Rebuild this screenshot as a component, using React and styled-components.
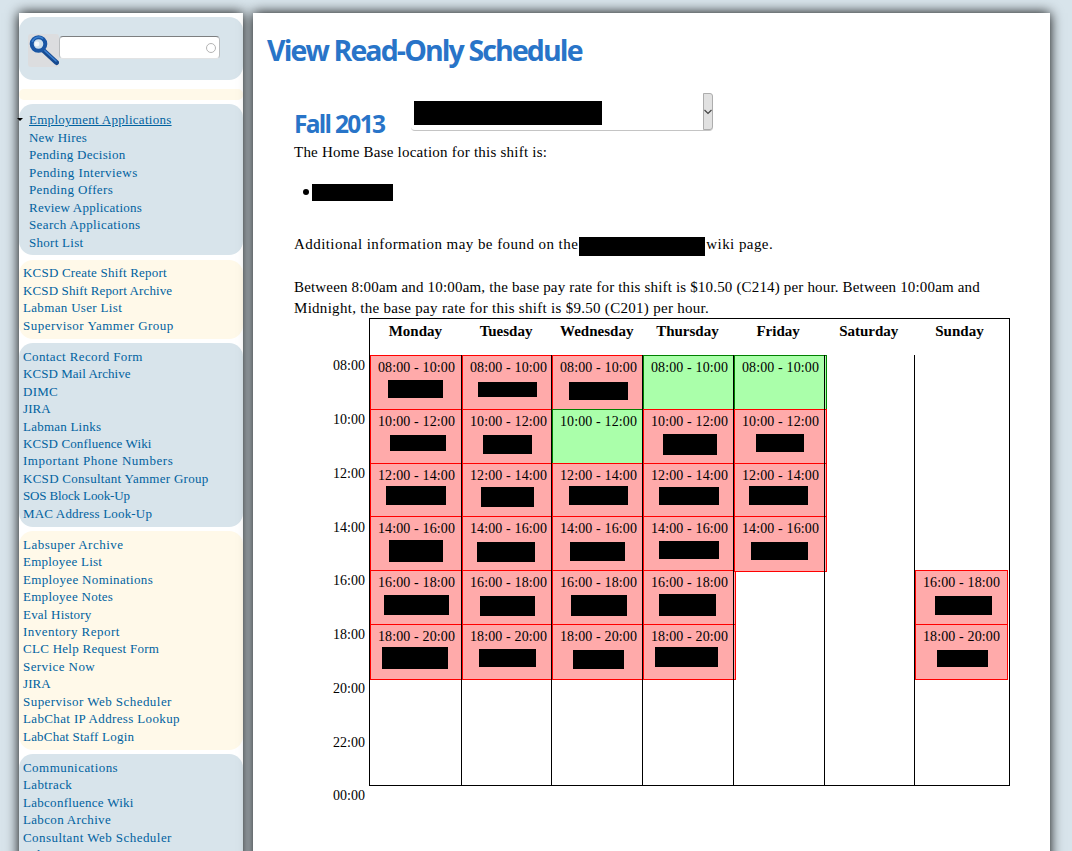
import React from "react";
import styled, { createGlobalStyle } from "styled-components";

const Global = createGlobalStyle`
  * { box-sizing: border-box; }
  body {
    margin: 0;
    background: #d8e4eb;
    color: #000;
    font-family: "Palatino Linotype", Palatino, "Liberation Serif", serif;
  }
`;

const Page = styled.div`
  display: flex;
  gap: 10px;
  height: 851px;
  padding: 13px 0 0 19px;
  overflow: hidden;
`;

const Sidebar = styled.aside`
  flex: none;
  width: 224px;
  height: 870px;
  padding-top: 4px;
  background: #fff;
  box-shadow: 0 0 12px #000;
`;

const Main = styled.main`
  flex: none;
  width: 797px;
  height: 870px;
  background: #fff;
  box-shadow: 0 0 12px #000;
`;

const SearchBlock = styled.form`
  display: flex;
  height: 63px;
  padding: 17px 0 0 9px;
  border-radius: 14px;
  background: #d8e4eb;
`;

const SearchIcon = styled.svg`
  display: block;
  width: 31px;
  height: 33px;
  border-radius: 3px;
  background: #dcdddf;
`;

const SearchField = styled.div`
  display: flex;
  align-items: center;
  justify-content: flex-end;
  width: 161px;
  height: 23px;
  margin-top: 2px;
  padding-right: 3px;
  border: 1px solid #b9bcbe;
  border-top-color: #7d7f80;
  border-bottom-color: #e2e3e4;
  border-radius: 4px;
  background: #fff;
`;

const Throbber = styled.span`
  width: 10px;
  height: 10px;
  border: 1.5px solid #b4b4b4;
  border-radius: 50%;
`;

const Divider = styled.div`
  height: 11px;
  margin: 9px 0 4px;
  border-radius: 5px;
  background: #fff9e9;
`;

const Menu = styled.ul`
  height: ${(p) => p.$height}px;
  margin: 0 0 ${(p) => p.$gap || 4}px;
  padding: ${(p) => p.$top}px 0 0 ${(p) => (p.$indent ? 10 : 4)}px;
  border-radius: 14px;
  background: ${(p) => (p.$cream ? "#fff9e9" : "#d8e4eb")};
  list-style: none;
`;

const MenuItem = styled.li`
  position: relative;
  height: ${(p) => p.$pitch}px;
  line-height: 17.5px;
  font-size: 13px;
  letter-spacing: ${(p) => 0.28 + p.$adjust}px;
  white-space: nowrap;
`;

const MenuLink = styled.a`
  color: #0062a0;
  text-decoration: ${(p) => (p.$current ? "underline" : "none")};
`;

const Expander = styled.span`
  position: absolute;
  left: -12px;
  top: 7px;
  border: 3px solid transparent;
  border-top-color: #000;
  border-bottom: 0;
`;

const Title = styled.h1`
  margin: 0;
  padding: 17px 0 0 14px;
  font: 700 28.5px/40px "Open Sans", sans-serif;
  letter-spacing: -1.88px;
  color: #2874c8;
  white-space: nowrap;
`;

const Content = styled.div`
  padding-left: 41px;
`;

const TermRow = styled.div`
  display: flex;
  height: 60px;
  margin-top: 10px;
`;

const Term = styled.h2`
  width: 117px;
  margin: 0;
  padding-top: 27px;
  font: 700 24.5px/34px "Open Sans", sans-serif;
  letter-spacing: -1.7px;
  color: #2874c8;
`;

const Select = styled.div`
  display: flex;
  justify-content: space-between;
  width: 302px;
  height: 38px;
  margin-top: 13px;
  padding-left: 3px;
  border-bottom: 1px solid #c4c4c4;
  border-radius: 4px;
`;

const SelectButton = styled.span`
  display: flex;
  align-items: center;
  justify-content: center;
  width: 10px;
  height: 37px;
  border: 1px solid #adadad;
  border-radius: 0 3px 3px 0;
  background: #e1e1e1;
`;

const Redaction = styled.span`
  display: block;
  flex: none;
  width: ${(p) => p.$w}px;
  height: ${(p) => p.$h}px;
  margin: ${(p) => p.$top || 0}px ${(p) => p.$right || 0}px 0 ${(p) => p.$left || 0}px;
  background: #000;
`;

const Text = styled.p`
  display: flex;
  height: 21px;
  margin: ${(p) => p.$top}px 0 0;
  font-size: 15px;
  line-height: 21px;
  letter-spacing: ${(p) => p.$spacing || 0.2}px;
  white-space: nowrap;
`;

const BaseList = styled.ul`
  display: flex;
  height: 17px;
  margin: 21px 0 0;
  padding: 0 0 0 9px;
  list-style: none;
`;

const Bullet = styled.span`
  width: 6px;
  height: 6px;
  margin: 5px 3px 0 0;
  border-radius: 50%;
  background: #000;
`;

const Schedule = styled.div`
  display: flex;
  margin-top: -1px;
`;

const Hours = styled.div`
  width: 71px;
  padding-top: 21.3px;
  margin-right: 4px;
`;

const Hour = styled.div`
  height: 53.75px;
  line-height: 54px;
  font-size: 14px;
  text-align: right;
`;

const Week = styled.div`
  width: 641px;
  height: 468px;
  border: 1px solid #000;
`;

const DayNames = styled.div`
  display: grid;
  grid-template-columns: repeat(7, 90.7px);
  height: 36px;
  font-size: 15px;
  font-weight: 700;
  line-height: 25px;
  text-align: center;
`;

const Days = styled.div`
  display: grid;
  grid-template-columns: 92px 90px 91px 91px 91px 90px 94px;
`;

const Day = styled.div`
  position: relative;
  display: grid;
  grid-template-rows: 54px 54px 53px 54px 54px;
  grid-auto-rows: 54px;
  height: 430px;
  &:not(:last-child)::after {
    content: "";
    position: absolute;
    z-index: 1;
    top: 0;
    right: 0;
    width: 1px;
    height: 430px;
    background: #000;
  }
`;

const Shift = styled.div`
  grid-row: ${(p) => p.$row};
  width: 93px;
  height: 56px;
  border: 1px solid ${(p) => (p.$open ? "#008000" : "#f00")};
  background: ${(p) => (p.$open ? "#afa" : "#faa")};
`;

const ShiftTime = styled.div`
  height: 22px;
  font-size: 14px;
  line-height: 24px;
  letter-spacing: 0.12px;
  text-align: center;
`;

// A link is its label and, where the label needs it, a tracking adjustment.
const menus = [
  {
    height: 151, top: 7, gap: 5, indent: true, pitch: 17.5,
    links: [["Employment Applications"], ["New Hires", -0.05], ["Pending Decision"], ["Pending Interviews", 0.16], ["Pending Offers", 0.1], ["Review Applications", -0.05], ["Search Applications", 0.1], ["Short List"]],
  },
  {
    height: 79, top: 4, cream: true, pitch: 17.5,
    links: [["KCSD Create Shift Report", -0.08], ["KCSD Shift Report Archive", -0.16], ["Labman User List", 0.05], ["Supervisor Yammer Group", 0.2]],
  },
  {
    height: 184, top: 4.85, pitch: 17.45,
    links: [["Contact Record Form", 0.1], ["KCSD Mail Archive", -0.24], ["DIMC"], ["JIRA", -0.2], ["Labman Links", -0.05], ["KCSD Confluence Wiki", -0.17], ["Important Phone Numbers", 0.26], ["KCSD Consultant Yammer Group"], ["SOS Block Look-Up", -0.41], ["MAC Address Look-Up", -0.1]],
  },
  {
    height: 219, top: 4.85, cream: true, pitch: 17.45,
    links: [["Labsuper Archive", 0.2], ["Employee List", -0.05], ["Employee Nominations", 0.07], ["Employee Notes"], ["Eval History", -0.08], ["Inventory Report", 0.2], ["CLC Help Request Form"], ["Service Now", 0.14], ["JIRA", -0.2], ["Supervisor Web Scheduler", 0.17], ["LabChat IP Address Lookup", 0.08], ["LabChat Staff Login", -0.08]],
  },
  {
    height: 184, top: 4.85, pitch: 17.45,
    links: [["Communications", 0.17], ["Labtrack", 0.1], ["Labconfluence Wiki"], ["Labcon Archive", 0.05], ["Consultant Web Scheduler", 0.17], ["Labman"]],
  },
];

const hours = ["08:00", "10:00", "12:00", "14:00", "16:00", "18:00", "20:00", "22:00", "00:00"];

// Each shift: row, then the name bar as [left, top, width, height]; open shifts have no bar.
const week = [
  { name: "Monday", shifts: [[0, [17, 2, 55, 18]], [1, [19, 3, 56, 16]], [2, [15, 0, 60, 19]], [3, [18, 1, 54, 22]], [4, [13, 2, 65, 20]], [5, [11, 0, 66, 22]]] },
  { name: "Tuesday", shifts: [[0, [15, 4, 59, 15]], [1, [20, 3, 49, 19]], [2, [18, 1, 53, 20]], [3, [14, 3, 58, 20]], [4, [17, 3, 55, 20]], [5, [16, 2, 57, 18]]] },
  { name: "Wednesday", shifts: [[0, [16, 4, 59, 18]], [1], [2, [16, 0, 59, 19]], [3, [17, 3, 55, 19]], [4, [18, 2, 56, 21]], [5, [20, 3, 51, 19]]] },
  { name: "Thursday", shifts: [[0], [1, [19, 2, 54, 21]], [2, [15, 1, 60, 18]], [3, [15, 2, 60, 18]], [4, [15, 1, 57, 22]], [5, [11, 0, 63, 20]]] },
  { name: "Friday", shifts: [[0], [1, [21, 2, 48, 18]], [2, [14, 0, 59, 19]], [3, [16, 3, 57, 18]]] },
  { name: "Saturday", shifts: [] },
  { name: "Sunday", shifts: [[4, [19, 3, 57, 19]], [5, [21, 3, 51, 17]]] },
];

function Magnifier() {
  return (
    <SearchIcon viewBox="0 0 31 33">
      <path d="M16 17 L28.5 28.5" stroke="#164a90" strokeWidth="5" strokeLinecap="round" />
      <path d="M16 16 L28 27" stroke="#3b7fd0" strokeWidth="1.6" strokeLinecap="round" />
      <circle cx="10.5" cy="10" r="6.8" fill="#cfe0ec" stroke="#1a56a4" strokeWidth="4" />
      <path d="M4.2 8 A6.8 6.8 0 0 1 15 4.6" fill="none" stroke="#3c80cf" strokeWidth="1.5" />
      <circle cx="9" cy="10" r="2.4" fill="#f3f8fb" />
    </SearchIcon>
  );
}

export default function App() {
  return (
    <>
      <Global />
      <Page>
        <Sidebar>
          <SearchBlock>
            <Magnifier />
            <SearchField><Throbber /></SearchField>
          </SearchBlock>
          <Divider />
          {menus.map((m, i) => (
            <Menu key={i} $height={m.height} $top={m.top} $gap={m.gap} $indent={m.indent} $cream={m.cream}>
              {m.links.map(([label, adjust = 0], j) => (
                <MenuItem key={label} $pitch={m.pitch} $adjust={adjust}>
                  {m.indent && j === 0 && <Expander />}
                  <MenuLink $current={m.indent && j === 0}>{label}</MenuLink>
                </MenuItem>
              ))}
            </Menu>
          ))}
        </Sidebar>
        <Main>
          <Title>View Read-Only Schedule</Title>
          <Content>
            <TermRow>
              <Term>Fall 2013</Term>
              <Select>
                <Redaction $w={188} $h={24} $top={8} />
                <SelectButton>
                  <svg width="8" height="6" viewBox="0 0 8 6"><path d="M0.5 1 L4 4.5 L7.5 1" fill="none" stroke="#444" strokeWidth="1.2" /></svg>
                </SelectButton>
              </Select>
            </TermRow>
            <Text $top={2} $spacing={0.23}>The Home Base location for this shift is:</Text>
            <BaseList>
              <Bullet />
              <Redaction $w={81} $h={17} />
            </BaseList>
            <Text $top={33} $spacing={0.44}>
              Additional information may be found on the
              <Redaction $w={126} $h={19} $top={3} $left={1} $right={1} />
              <span>wiki page.</span>
            </Text>
            <Text $top={22} $spacing={0.17}>Between 8:00am and 10:00am, the base pay rate for this shift is $10.50 (C214) per hour. Between 10:00am and</Text>
            <Text $top={0} $spacing={0.29}>Midnight, the base pay rate for this shift is $9.50 (C201) per hour.</Text>
            <Schedule>
              <Hours>{hours.map((h) => <Hour key={h}>{h}</Hour>)}</Hours>
              <Week>
                <DayNames>{week.map((d) => <span key={d.name}>{d.name}</span>)}</DayNames>
                <Days>
                  {week.map((d) => (
                    <Day key={d.name}>
                      {d.shifts.map(([row, bar]) => (
                        <Shift key={row} $row={row + 1} $open={!bar}>
                          <ShiftTime>{hours[row]} - {hours[row + 1]}</ShiftTime>
                          {bar && <Redaction $left={bar[0]} $top={bar[1]} $w={bar[2]} $h={bar[3]} />}
                        </Shift>
                      ))}
                    </Day>
                  ))}
                </Days>
              </Week>
            </Schedule>
          </Content>
        </Main>
      </Page>
    </>
  );
}
